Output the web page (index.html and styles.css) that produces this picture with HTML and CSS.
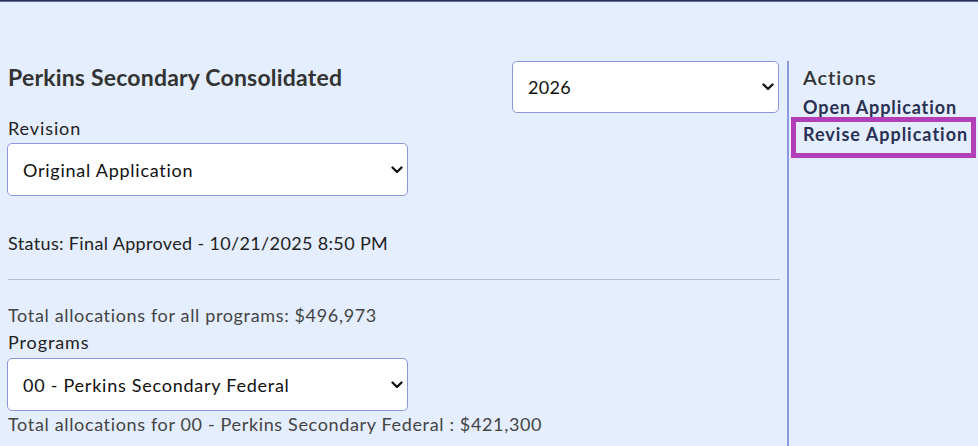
FILE: index.html
```html
<!DOCTYPE html>
<html lang="en">
<head>
<meta charset="utf-8">
<title>Perkins Secondary Consolidated</title>
<link rel="stylesheet" href="styles.css">
</head>
<body>
<div class="topbar"></div>
<div class="page">
  <main class="main">
    <div class="head-row">
      <div class="head-left">
        <h2 class="title">Perkins Secondary Consolidated</h2>
        <label class="label label-revision">Revision</label>
        <div class="select-wrap select-revision">
          <select class="select"><option>Original Application</option></select>
          <svg class="chev" width="12" height="8" viewBox="0 0 12 8"><path d="M1.5 1.5 L6 6 L10.5 1.5" fill="none" stroke="#111" stroke-width="2.3" stroke-linecap="round" stroke-linejoin="round"/></svg>
        </div>
      </div>
      <div class="select-wrap select-year">
        <select class="select"><option>2026</option></select>
        <svg class="chev" width="12" height="8" viewBox="0 0 12 8"><path d="M1.5 1.5 L6 6 L10.5 1.5" fill="none" stroke="#111" stroke-width="2.3" stroke-linecap="round" stroke-linejoin="round"/></svg>
      </div>
    </div>
    <p class="status">Status: Final Approved - 10/21/2025 8:50 PM</p>
    <hr class="rule">
    <p class="total total-all">Total allocations for all programs: $496,973</p>
    <label class="label">Programs</label>
    <div class="select-wrap select-program">
      <select class="select"><option>00 - Perkins Secondary Federal</option></select>
      <svg class="chev" width="12" height="8" viewBox="0 0 12 8"><path d="M1.5 1.5 L6 6 L10.5 1.5" fill="none" stroke="#111" stroke-width="2.3" stroke-linecap="round" stroke-linejoin="round"/></svg>
    </div>
    <p class="total">Total allocations for 00 - Perkins Secondary Federal : $421,300</p>
  </main>
  <aside class="actions">
    <h3 class="actions-title">Actions</h3>
    <a class="action-link" href="#">Open Application</a>
    <a class="action-link action-highlight" href="#">Revise Application</a>
  </aside>
</div>
</body>
</html>
```
FILE: styles.css
```css
html, body {
  margin: 0;
  padding: 0;
}
body {
  background: #e4eefe;
  font-family: "Lato", "Noto Sans", sans-serif;
  font-size: 18px;
  line-height: 27px;
  color: #222;
  height: 446px;
  overflow: hidden;
}
.topbar {
  height: 0;
  border-top: 1px solid #2c3148;
  border-bottom: 1px solid #5b6cb0;
}
.page {
  display: flex;
  align-items: stretch;
  padding-top: 59px;
  height: 400px;
}
.main {
  width: 772px;
  margin-left: 8px;
  flex: none;
}
.head-row {
  display: flex;
  justify-content: space-between;
  align-items: flex-start;
}
.head-left {
  display: flex;
  flex-direction: column;
  align-items: flex-start;
}
.title {
  margin: 2px 0 0;
  font-size: 23px;
  line-height: 28px;
  font-weight: 700;
  letter-spacing: 0.2px;
  color: #333;
}
.label {
  display: block;
  color: #222;
  letter-spacing: 0.9px;
}
.label-revision {
  margin-top: 24px;
}
.select-wrap {
  position: relative;
  width: fit-content;
}
.select {
  appearance: none;
  -webkit-appearance: none;
  display: block;
  box-sizing: border-box;
  height: 53px;
  width: 401px;
  margin: 0;
  padding: 0 30px 0 15px;
  border: 1px solid #8c95df;
  border-radius: 5px;
  background: #fff;
  font-family: inherit;
  font-size: 18px;
  letter-spacing: 0.75px;
  color: #111;
  outline: none;
}
.select-revision {
  margin-top: 1px;
  margin-left: -1px;
}
.select-year .select {
  width: 267px;
  height: 52px;
  letter-spacing: 0.3px;
}
.select-year {
  margin-right: 1px;
}
.chev {
  position: absolute;
  right: 5px;
  top: 50%;
  margin-top: -4px;
}
.select-program {
  margin-top: 2px;
  margin-left: -1px;
}
.status {
  margin: 34px 0 0;
  letter-spacing: 0.35px;
}
.rule {
  margin: 22px 0 0;
  border: 0;
  height: 1px;
  background: #b6bdd6;
}
.total {
  margin: 0;
  color: #444;
  letter-spacing: 0.65px;
}
.total-all {
  margin-top: 22px;
}
.actions {
  margin-left: 7px;
  border-left: 2px solid #8e99e2;
  padding: 3px 0 0 14px;
  flex: 1;
  display: flex;
  flex-direction: column;
  align-items: flex-start;
}
.actions-title {
  margin: 0;
  font-size: 20px;
  line-height: 26px;
  font-weight: 600;
  letter-spacing: 1px;
  color: #333;
}
.action-link {
  margin-top: 6px;
  font-size: 18px;
  line-height: 22px;
  font-weight: 700;
  letter-spacing: 0.9px;
  color: #2a3052;
  text-decoration: none;
}
.action-highlight {
  margin: -1px 0 0 -12px;
  padding: 0 3px 7px 7px;
  border: 5px solid #b23fb7;
  line-height: 24px;
  letter-spacing: 1px;
}
```
